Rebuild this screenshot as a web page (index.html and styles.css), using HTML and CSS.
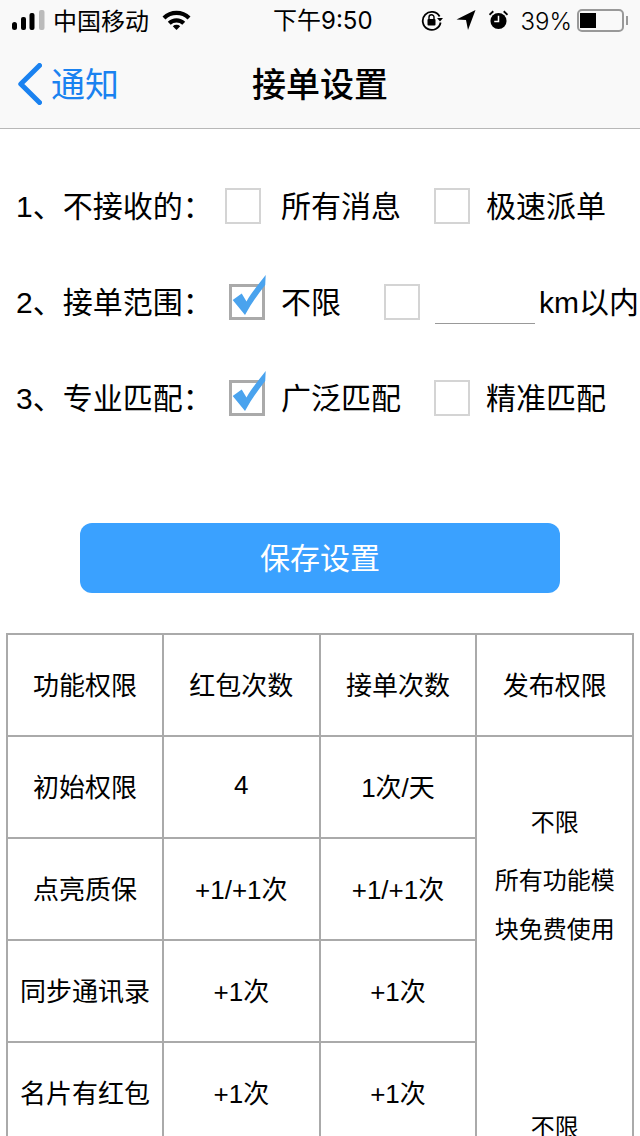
FILE: index.html
```html
<!DOCTYPE html>
<html lang="zh-CN">
<head>
    <meta charset="UTF-8">
    <meta name="viewport" content="width=device-width, initial-scale=1.0">
    <title>接单设置</title>
    <link rel="stylesheet" href="styles.css">
</head>
<body>
    <!-- Status bar -->
    <div class="status-bar">
        <div class="status-left">
            <svg class="signal" width="33" height="20" viewBox="0 0 33 20">
                <rect x="0" y="12" width="5" height="8" rx="2.5" fill="#000"/>
                <rect x="9" y="7" width="5" height="13" rx="2" fill="#000"/>
                <rect x="17.500" y="3" width="5" height="17" rx="2" fill="#000"/>
                <rect x="27" y="0" width="5.500" height="20" rx="2" fill="#bbb"/>
            </svg>
            <span class="carrier">中国移动</span>
            <svg class="wifi" width="29" height="20" viewBox="0 0 29 20">
                <path d="M0.500 6.500 A20 20 0 0 1 28.500 6.500 L25.600 9.500 A16 16 0 0 0 3.400 9.500 Z" fill="#000"/>
                <path d="M5.800 11.800 A12.500 12.500 0 0 1 23.200 11.800 L20.300 14.700 A8.400 8.400 0 0 0 8.700 14.700 Z" fill="#000"/>
                <path d="M10.800 16.300 A5.400 5.400 0 0 1 18.200 16.300 L14.500 20 Z" fill="#000"/>
            </svg>
        </div>
        <div class="status-time">下午9:50</div>
        <div class="status-right">
            <svg width="22" height="22" viewBox="0 0 22 22">
                <path d="M18.600 7.500 A9 9 0 1 0 19.600 13.500" fill="none" stroke="#000" stroke-width="1.800"/>
                <path d="M16 9 L22 9 L19 12.500 Z" fill="#000"/>
                <rect x="6.500" y="10" width="8" height="6.500" rx="1" fill="#000"/>
                <path d="M8 10 V8.200 A2.500 2.500 0 0 1 13 8.200 V10" fill="none" stroke="#000" stroke-width="1.400"/>
            </svg>
            <svg class="status-icon" width="20" height="20" viewBox="0 0 20 20">
                <path d="M19.500 0 L12 20 L10 10 L0.500 9.500 Z" fill="#000"/>
            </svg>
            <svg class="status-icon" width="19" height="20" viewBox="0 0 20 20">
                <circle cx="10" cy="11" r="8.500" fill="#000"/>
                <path d="M10 5.500 V11.500 H5.500" fill="none" stroke="#fff" stroke-width="1.600"/>
                <path d="M0.500 4.500 L4.500 0.800 M19.500 4.500 L15.500 0.800" stroke="#000" stroke-width="2"/>
            </svg>
            <span class="battery-text">39%</span>
            <div class="battery">
                <div class="battery-level"></div>
            </div>
            <div class="battery-cap"></div>
        </div>
    </div>

    <!-- Nav bar -->
    <div class="nav-bar">
        <div class="nav-back">
            <svg width="24" height="42" viewBox="0 0 24 42">
                <path d="M21.500 2.500 L2.800 21 L21.500 39.500" fill="none" stroke="#1a82f0" stroke-width="5" stroke-linecap="round" stroke-linejoin="round"/>
            </svg>
            <span>通知</span>
        </div>
        <div class="nav-title">接单设置</div>
    </div>

    <!-- Settings -->
    <div class="settings">
        <div class="row">
            <span class="row-label label-first">1、不接收的：</span>
            <span class="box"></span>
            <span class="opt opt-first opt-wide">所有消息</span>
            <span class="box"></span>
            <span class="opt">极速派单</span>
        </div>
        <div class="row">
            <span class="row-label">2、接单范围：</span>
            <svg class="tick" width="36" height="36" viewBox="0 0 36 36">
                <rect x="1.500" y="1.500" width="33" height="33" fill="#fff" stroke="#aaa" stroke-width="3"/>
                <path d="M3.700 16 L12.700 9.500 L17.500 17.500 C22 9 30 0 36.700 -9 L36.200 1 C29 10 22 20 16 31 Z" fill="#4aa3ee"/>
            </svg>
            <span class="opt opt-short">不限</span>
            <span class="box"></span>
            <span class="blank"></span>
            <span class="opt unit">km以内</span>
        </div>
        <div class="row">
            <span class="row-label">3、专业匹配：</span>
            <svg class="tick" width="36" height="36" viewBox="0 0 36 36">
                <rect x="1.500" y="1.500" width="33" height="33" fill="#fff" stroke="#aaa" stroke-width="3"/>
                <path d="M3.700 16 L12.700 9.500 L17.500 17.500 C22 9 30 0 36.700 -9 L36.200 1 C29 10 22 20 16 31 Z" fill="#4aa3ee"/>
            </svg>
            <span class="opt opt-wide">广泛匹配</span>
            <span class="box"></span>
            <span class="opt">精准匹配</span>
        </div>
    </div>

    <button class="save" type="button">保存设置</button>

    <!-- Permissions table, runs on below the fold -->
    <table class="perms">
        <tr>
            <td>功能权限</td>
            <td>红包次数</td>
            <td>接单次数</td>
            <td>发布权限</td>
        </tr>
        <tr>
            <td>初始权限</td>
            <td>4</td>
            <td>1次/天</td>
            <td class="publish" rowspan="5">
                <p>不限</p>
                <p class="publish-all">所有功能模块免费使用</p>
                <p class="publish-last">不限</p>
            </td>
        </tr>
        <tr>
            <td>点亮质保</td>
            <td>+1/+1次</td>
            <td>+1/+1次</td>
        </tr>
        <tr>
            <td>同步通讯录</td>
            <td>+1次</td>
            <td>+1次</td>
        </tr>
        <tr>
            <td>名片有红包</td>
            <td>+1次</td>
            <td>+1次</td>
        </tr>
        <tr>
            <td></td>
            <td></td>
            <td></td>
        </tr>
    </table>
</body>
</html>
```

FILE: styles.css
```css
html, body {
    height: 1136px;
    overflow: hidden;
}
body {
    margin: 0;
    background-color: #ffffff;
    color: #000000;
    font-family: "Liberation Sans", "Noto Sans CJK SC", sans-serif;
}
.status-bar {
    height: 40px;
    padding: 0 12px;
    display: flex;
    align-items: center;
    background-color: #f9f9f9;
    font-size: 24px;
    line-height: 40px;
}
.status-left {
    width: 261px;
    display: flex;
    align-items: center;
}
.carrier {
    margin-left: 8px;
    margin-top: 3px;
}
.wifi {
    margin-left: 13px;
}
.status-time {
    font-family: Inter, "Noto Sans CJK SC", sans-serif;
    margin-top: 1px;
}
.status-right {
    margin-left: auto;
    display: flex;
    align-items: center;
}
.status-icon {
    margin-left: 13px;
}
.battery-text {
    margin-left: 13px;
    margin-top: 3px;
    font-family: Inter, sans-serif;
    font-weight: 300;
}
.battery {
    width: 47px;
    height: 23px;
    margin-left: 5px;
    padding: 2px 1px;
    border: 2px solid #999;
    border-radius: 5px;
    box-sizing: border-box;
}
.battery-level {
    width: 16px;
    height: 15px;
    background-color: #000;
}
.battery-cap {
    width: 2px;
    height: 9px;
    margin-left: 2px;
    background-color: #999;
}
.nav-bar {
    height: 89px;
    padding-left: 18px;
    box-sizing: border-box;
    display: flex;
    align-items: center;
    position: relative;
    background-color: #f9f9f9;
    border-bottom: 1px solid #b8b8b8;
}
.nav-back {
    display: flex;
    align-items: center;
    color: #1a82f0;
    font-size: 34px;
    line-height: 44px;
}
.nav-back span {
    margin-left: 9px;
    margin-top: 2px;
}
.nav-title {
    position: absolute;
    left: 0;
    right: 0;
    margin-top: 2px;
    text-align: center;
    font-size: 34px;
    font-weight: 500;
    line-height: 44px;
}
.settings {
    padding: 59px 0 0 16px;
    display: flex;
    flex-direction: column;
    gap: 60px;
}
.row {
    height: 36px;
    display: flex;
    align-items: center;
    font-size: 30px;
    line-height: 36px;
    white-space: nowrap;
}
.row-label {
    width: 213px;
    margin-top: 2px;
}
.row-label.label-first {
    width: 209px;
}
.box {
    width: 36px;
    height: 36px;
    border: 2px solid #d4d4d4;
    box-sizing: border-box;
    flex-shrink: 0;
}
.tick {
    overflow: visible;
    flex-shrink: 0;
}
.opt {
    margin-left: 16px;
    margin-top: 2px;
}
.opt-first {
    margin-left: 20px;
}
.opt-wide {
    width: 153px;
}
.opt-short {
    width: 103px;
}
.blank {
    width: 100px;
    height: 39px;
    margin-left: 15px;
    border-bottom: 1px solid #999;
    align-self: flex-start;
}
.unit {
    margin-left: 4px;
}
.save {
    display: block;
    width: 480px;
    height: 70px;
    margin: 107px auto 0;
    padding: 0 0 4px;
    border: none;
    border-radius: 12px;
    background-color: #3aa1ff;
    color: #ffffff;
    font-family: inherit;
    font-size: 30px;
}
.perms {
    width: 628px;
    margin: 40px 0 0 6px;
    border-collapse: collapse;
    table-layout: fixed;
    font-size: 26px;
    text-align: center;
}
.perms td {
    height: 96px;
    padding: 0 0 4px;
    border: 2px solid #aaaaaa;
}
.perms td:first-child {
    width: 154px;
}
.perms .publish {
    vertical-align: top;
    padding: 0 14px;
    font-size: 24px;
    line-height: 49px;
}
.publish p {
    margin: 61px 0 0;
}
.publish .publish-all {
    margin-top: 9px;
}
.publish .publish-last {
    margin-top: 149px;
}
```
